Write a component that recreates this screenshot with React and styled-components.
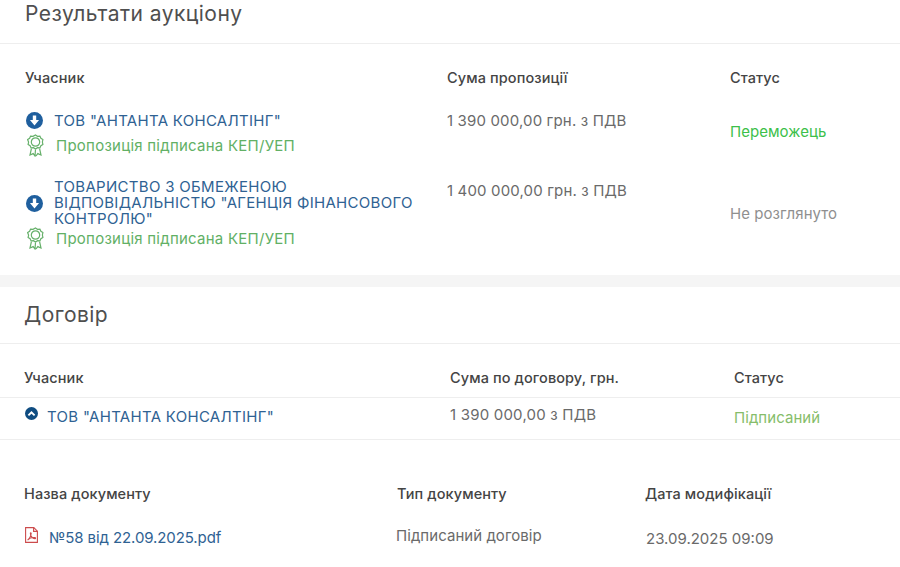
import React from "react";
import styled, { createGlobalStyle } from "styled-components";

const GlobalStyle = createGlobalStyle`
    html, body {
        margin: 0;
        padding: 0;
        background: #fff;
        overflow: hidden;
    }
    body {
        font-family: Inter, "Noto Sans", "Liberation Sans", sans-serif;
        color: #555;
    }
`;

const Page = styled.div`
    width: 900px;
    height: 567px;
    overflow: hidden;
`;

const SectionTitle = styled.div`
    height: ${(p) => p.$height}px;
    box-sizing: border-box;
    padding-left: ${(p) => p.$left}px;
    padding-top: ${(p) => p.$top}px;
    font-size: 21px;
    line-height: 28px;
    letter-spacing: 0.45px;
    color: #4f4f4f;
    border-bottom: 1px solid #eeeeee;
`;

const Band = styled.div`
    height: 12px;
    background: #f5f5f5;
`;

const Row = styled.div`
    display: grid;
    grid-template-columns: ${(p) => p.$columns};
    height: ${(p) => p.$height}px;
    box-sizing: border-box;
    padding-left: ${(p) => p.$left || 24}px;
    padding-top: ${(p) => p.$top || 0}px;
    border-bottom: ${(p) => (p.$line ? "1px solid #eeeeee" : "none")};
`;

const HeadCell = styled.div`
    font-size: 14.5px;
    line-height: 18px;
    font-weight: 500;
    letter-spacing: 0.1px;
    color: #444444;
`;

const Value = styled.div`
    font-size: 15px;
    line-height: 18px;
    letter-spacing: ${(p) => p.$spacing ?? 0.15}px;
    color: #6a6a6a;
    margin-top: ${(p) => p.$top || 0}px;
    margin-left: ${(p) => p.$shift || 0}px;
`;

const Status = styled.div`
    font-size: 15px;
    line-height: 18px;
    letter-spacing: 0.05px;
    color: ${(p) => p.$color};
    margin-top: ${(p) => p.$top || 0}px;
`;

const Participant = styled.div`
    display: flex;
    flex-direction: column;
    gap: ${(p) => p.$gap}px;
`;

const NameLine = styled.div`
    display: flex;
    align-items: center;
    gap: 11px;
    padding-left: 1px;
`;

const ContractLine = styled.div`
    display: flex;
    align-items: flex-start;
    gap: 9px;
    padding-left: 1px;
`;

const IconSlot = styled.span`
    display: flex;
    flex: none;
    margin-top: 1px;
`;

const Name = styled.div`
    width: 368px;
    font-size: 15px;
    line-height: 16px;
    letter-spacing: 0.3px;
    color: #2f6293;
`;

const ContractName = styled(Name)`
    margin-top: 3px;
`;

const Signed = styled.div`
    display: flex;
    align-items: center;
    gap: 12px;
    padding-left: 2px;
    font-size: 15px;
    line-height: 18px;
    letter-spacing: 0.25px;
    color: #62b065;
`;

const DocLink = styled.div`
    display: flex;
    align-items: flex-start;
    gap: 11px;
    padding-left: 1px;
    font-size: 15px;
    line-height: 18px;
    letter-spacing: -0.1px;
    color: #2f6293;
`;

const DocName = styled.span`
    margin-top: 2px;
`;

const CircleIcon = ({ up, size = 17, color = "#1f5f9e" }) => (
    <svg width={size} height={size} viewBox="0 0 18 18" style={{ flex: "none" }}>
        <circle cx="9" cy="9" r="9" fill={color} />
        {up ? (
            <path d="M3.8 10.8 9 5.600l5.200 5.200-1.800 1.700L9 9.200l-3.400 3.300z" fill="#fff" />
        ) : (
            <path d="M7.200 3.600h3.600v5h3L9 14.400 4.200 8.600h3z" fill="#fff" />
        )}
    </svg>
);

const AwardIcon = () => (
    <svg width="17" height="23" viewBox="0 0 17 23" fill="none" stroke="#66b06a" strokeWidth="1.2" style={{ flex: "none" }}>
        <path d="M8.500 1l2 1.300 2.400-.2 1 2.200 2 1.300-.5 2.400.5 2.400-2 1.300-1 2.200-2.400-.2-2 1.300-2-1.300-2.400.2-1-2.200-2-1.300.5-2.400L.6 5.600l2-1.300 1-2.200 2.400.2z" />
        <circle cx="8.500" cy="8" r="4.200" />
        <path d="M4.400 14.600 3 21l3.200-1.400L8 22l.5-6.500M12.600 14.600 14 21l-3.200-1.400L9 22" />
    </svg>
);

const PdfIcon = () => (
    <svg width="13" height="16" viewBox="0 0 13 16" fill="none" stroke="#cc4b4c" strokeWidth="1.1" style={{ flex: "none" }}>
        <path d="M.6.6h8.200l3.600 3.600v11.200H.6z" />
        <path d="M8.600.6v3.800h3.800" />
        <path d="M2.600 13c1.600-.8 3-3.300 3.600-6.600.1-.8-.8-.9-.8 0 0 2.300 2 5 4.400 5.200 1 .1 1-.9 0-1-1.900-.2-5.500.7-7.200 2.400z" />
    </svg>
);

const auctionColumns = "422px 283px 1fr";
const contractColumns = "426px 284px 1fr";
const docColumns = "373px 248px 1fr";

function App() {
    return (
        <Page>
            <GlobalStyle />
            <SectionTitle $height={44} $left={25} $top={0}>
                Результати аукціону
            </SectionTitle>
            <Row $columns={auctionColumns} $left={25} $top={25} $height={64}>
                <HeadCell>Учасник</HeadCell>
                <HeadCell>Сума пропозиції</HeadCell>
                <HeadCell>Статус</HeadCell>
            </Row>
            <Row $columns={auctionColumns} $left={25} $top={4} $height={71}>
                <Participant $gap={5}>
                    <NameLine>
                        <CircleIcon />
                        <Name>ТОВ "АНТАНТА КОНСАЛТІНГ"</Name>
                    </NameLine>
                    <Signed>
                        <AwardIcon />
                        Пропозиція підписана КЕП/УЕП
                    </Signed>
                </Participant>
                <Value $top={0}>1 390 000,00 грн. з ПДВ</Value>
                <Status $color="#3cc04a" $top={11}>Переможець</Status>
            </Row>
            <Row $columns={auctionColumns} $left={25} $height={96}>
                <Participant $gap={0}>
                    <NameLine>
                        <CircleIcon />
                        <Name>ТОВАРИСТВО З ОБМЕЖЕНОЮ ВІДПОВІДАЛЬНІСТЮ "АГЕНЦІЯ ФІНАНСОВОГО КОНТРОЛЮ"</Name>
                    </NameLine>
                    <Signed>
                        <AwardIcon />
                        Пропозиція підписана КЕП/УЕП
                    </Signed>
                </Participant>
                <Value $top={3}>1 400 000,00 грн. з ПДВ</Value>
                <Status $color="#8f8f8f" $top={26}>Не розглянуто</Status>
            </Row>
            <Band />
            <SectionTitle $height={57} $left={24} $top={14}>
                Договір
            </SectionTitle>
            <Row $columns={contractColumns} $top={25} $height={54} $line>
                <HeadCell>Учасник</HeadCell>
                <HeadCell>Сума по договору, грн.</HeadCell>
                <HeadCell>Статус</HeadCell>
            </Row>
            <Row $columns={contractColumns} $top={8} $height={42} $line>
                <ContractLine>
                    <IconSlot>
                        <CircleIcon up size={13} color="#0f4c81" />
                    </IconSlot>
                    <ContractName>ТОВ "АНТАНТА КОНСАЛТІНГ"</ContractName>
                </ContractLine>
                <Value $spacing={0.2}>1 390 000,00 з ПДВ</Value>
                <Status $color="#86bd6a" $top={3}>Підписаний</Status>
            </Row>
            <Row $columns={docColumns} $top={45} $height={87}>
                <HeadCell>Назва документу</HeadCell>
                <HeadCell>Тип документу</HeadCell>
                <HeadCell>Дата модифікації</HeadCell>
            </Row>
            <Row $columns={docColumns} $height={40}>
                <DocLink>
                    <PdfIcon />
                    <DocName>№58 від 22.09.2025.pdf</DocName>
                </DocLink>
                <Value $spacing={0.05} $shift={-1}>Підписаний договір</Value>
                <Value $spacing={0} $top={3} $shift={1}>23.09.2025 09:09</Value>
            </Row>
        </Page>
    );
}

export default App;
